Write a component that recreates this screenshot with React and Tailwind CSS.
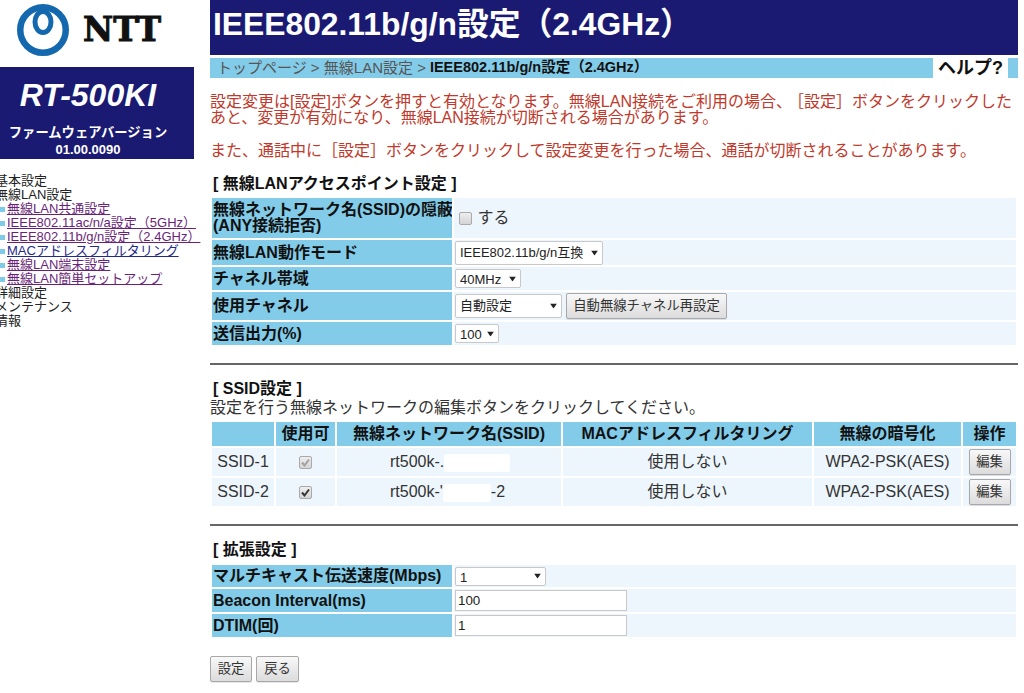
const font = '[font-family:"Liberation_Sans","Noto_Sans_CJK_JP",sans-serif]';

function Logo() {
  return (
    <svg width="52" height="52" viewBox="0 0 52 52" className="shrink-0">
      <circle cx="26" cy="26" r="22.75" fill="none" stroke="#1469ae" strokeWidth="6.5" />
      <ellipse cx="26" cy="18" rx="8" ry="10.5" fill="#fff" stroke="#1469ae" strokeWidth="5" />
    </svg>
  );
}

function Sidebar() {
  const items = [
    ['基本設定', null],
    ['無線LAN設定', null],
    ['無線LAN共通設定', 'text-[#6b1f7a]'],
    ['IEEE802.11ac/n/a設定（5GHz）', 'text-[#6b1f7a]'],
    ['IEEE802.11b/g/n設定（2.4GHz）', 'text-[#6b1f7a]'],
    ['MACアドレスフィルタリング', 'text-[#1f2a8c]'],
    ['無線LAN端末設定', 'text-[#6b1f7a]'],
    ['無線LAN簡単セットアップ', 'text-[#6b1f7a]'],
    ['詳細設定', null],
    ['メンテナンス', null],
    ['情報', null],
  ];
  return (
    <aside className="w-[210px] shrink-0 overflow-hidden">
      <div className="h-[67px] flex items-start pl-[17px] pt-[4px] gap-[14px]">
        <Logo />
        <span className='[font-family:"DejaVu_Serif",serif] font-bold text-[33px] leading-[52px] text-[#111] [-webkit-text-stroke:1px_#111]'>NTT</span>
      </div>
      <div className="w-[194px] h-[92px] bg-[#1a1a72] text-white text-center flex flex-col items-center pr-[18px]">
        <div className="text-[32px] leading-[34px] font-bold italic mt-[11px] whitespace-nowrap">RT-500KI</div>
        <div className="text-[13.3px] leading-[16px] font-bold mt-[13px] whitespace-nowrap">ファームウェアバージョン</div>
        <div className="text-[13px] leading-[14px] font-bold mt-[2px]">01.00.0090</div>
      </div>
      <ul className="mt-[15px] text-[13px] leading-[14px] text-[#222] whitespace-nowrap">
        {items.map(([t, c]) =>
          c ? (
            <li key={t} className="flex items-center h-[14px]">
              <span className="w-[5px] h-[5px] bg-[#7ecbe8] mr-[2px] shrink-0" />
              <a className={`${c} underline`}>{t}</a>
            </li>
          ) : (
            <li key={t} className="h-[14px] -ml-[5px]">{t}</li>
          )
        )}
      </ul>
    </aside>
  );
}

const btn = 'bg-gradient-to-b from-[#f8f8f8] to-[#dcdcdc] border border-[#a8a8a8] rounded-[2px] text-[#333] text-[13.33px] shadow-[0_1px_1px_rgba(0,0,0,0.1)]';
const th = 'bg-[#83cce9] font-bold text-[#111] text-[16px] leading-[16px] pl-[1px] p-0 text-left whitespace-nowrap overflow-hidden';
const td = 'bg-[#eef6fd] p-0 pl-[1px]';
const inputCls = 'block h-[21px] w-[172px] bg-white border border-[#c8c8c8] text-[13.33px] text-[#222] pl-[2px]';

function Select({ value, className }) {
  return (
    <span className={`relative block shrink-0 ${className}`}>
      <select className="appearance-none block w-full h-full bg-white border border-[#c8c8c8] rounded-[2px] text-[13px] text-[#222] pl-[4px]">
        <option>{value}</option>
      </select>
      <svg viewBox="0 0 7 5" className="absolute right-[5px] top-1/2 -translate-y-1/2 w-[7px] h-[5px] pointer-events-none">
        <path d="M0 0 H7 L3.5 5Z" fill="#222" />
      </svg>
    </span>
  );
}

function Check({ checked, disabled }) {
  return (
    <span className="relative inline-block w-[13px] h-[13px] align-middle">
      <input
        type="checkbox"
        defaultChecked={checked}
        disabled={disabled}
        className="appearance-none block w-[13px] h-[13px] rounded-[2px] border border-[#aaa] bg-gradient-to-b from-[#eee] to-[#d4d4d4]"
      />
      {checked && (
        <svg viewBox="0 0 13 13" className="absolute inset-0 w-[13px] h-[13px] pointer-events-none">
          <path d="M3 6.5 L5.5 9.5 L10 3.5" fill="none" stroke={disabled ? '#a0a0a0' : '#333'} strokeWidth="2" />
        </svg>
      )}
    </span>
  );
}

function Heading({ children, className = '' }) {
  return <div className={`font-bold text-[16px] leading-[16px] text-[#111] pl-[3px] ${className}`}>{children}</div>;
}

function AccessPoint() {
  return (
    <table className="border-separate border-spacing-[2px] table-fixed w-[808px]">
      <colgroup><col className="w-[240px]" /><col /></colgroup>
      <tbody>
        <tr className="h-[40px]">
          <th className={`${th} text-[15.7px]`}>無線ネットワーク名(SSID)の隠蔽<br />(ANY接続拒否)</th>
          <td className={`${td} pl-[5px]`}>
            <Check /> <span className="text-[16px] text-[#333] ml-[1px]">する</span>
          </td>
        </tr>
        <tr className="h-[25px]">
          <th className={th}>無線LAN動作モード</th>
          <td className={td}><Select value="IEEE802.11b/g/n互換" className="h-[24px] w-[148px]" /></td>
        </tr>
        <tr className="h-[23px]">
          <th className={th}>チャネル帯域</th>
          <td className={td}><Select value="40MHz" className="h-[19px] w-[66px]" /></td>
        </tr>
        <tr className="h-[28px]">
          <th className={th}>使用チャネル</th>
          <td className={td}>
            <div className="flex items-center gap-[4px]">
              <Select value="自動設定" className="h-[24px] w-[107px]" />
              <button className={`${btn} h-[26px] w-[161px]`}>自動無線チャネル再設定</button>
            </div>
          </td>
        </tr>
        <tr className="h-[23px]">
          <th className={th}>送信出力(%)</th>
          <td className={td}><Select value="100" className="h-[19px] w-[44px]" /></td>
        </tr>
      </tbody>
    </table>
  );
}

function SsidRow({ id, checked, disabled, name }) {
  const cell = 'bg-[#eef6fd] text-center text-[#333] text-[16px] p-0 h-[28px]';
  return (
    <tr>
      <td className={cell}>{id}</td>
      <td className={cell}><Check checked={checked} disabled={disabled} /></td>
      <td className={`${cell} text-left pl-[53px] whitespace-nowrap`}>{name}</td>
      <td className={cell}>使用しない</td>
      <td className={cell}>WPA2-PSK(AES)</td>
      <td className={cell}>
        <button className={`${btn} h-[26px] w-[42px] block mx-auto`}>編集</button>
      </td>
    </tr>
  );
}

function Blot({ w }) {
  return <span className={`inline-block h-[18px] bg-white rounded-[3px] align-middle ${w}`} />;
}

function SsidTable() {
  const h = 'bg-[#83cce9] font-bold text-[#111] text-[16px] text-center p-0 h-[23px]';
  return (
    <table className="border-separate border-spacing-[2px] table-fixed w-[808px]">
      <colgroup>
        <col className="w-[62px]" /><col className="w-[59px]" /><col className="w-[224px]" />
        <col className="w-[249px]" /><col className="w-[147px]" /><col />
      </colgroup>
      <thead>
        <tr>
          <th className={h}></th><th className={h}>使用可</th><th className={h}>無線ネットワーク名(SSID)</th>
          <th className={h}>MACアドレスフィルタリング</th><th className={h}>無線の暗号化</th><th className={h}>操作</th>
        </tr>
      </thead>
      <tbody>
        <SsidRow id="SSID-1" checked disabled name={<>rt500k-.<Blot w="w-[66px]" /></>} />
        <SsidRow id="SSID-2" checked name={<>rt500k-'<Blot w="w-[48px]" />-2</>} />
      </tbody>
    </table>
  );
}

function Extended() {
  return (
    <table className="border-separate border-spacing-[2px] table-fixed w-[808px]">
      <colgroup><col className="w-[240px]" /><col /></colgroup>
      <tbody>
        <tr className="h-[22px]">
          <th className={th}>マルチキャスト伝送速度(Mbps)</th>
          <td className={td}><Select value="1" className="h-[19px] w-[91px]" /></td>
        </tr>
        <tr className="h-[23px]">
          <th className={th}>Beacon Interval(ms)</th>
          <td className={td}><input defaultValue="100" className={inputCls} /></td>
        </tr>
        <tr className="h-[23px]">
          <th className={th}>DTIM(回)</th>
          <td className={td}><input defaultValue="1" className={inputCls} /></td>
        </tr>
      </tbody>
    </table>
  );
}

export default function App() {
  return (
    <div className={`${font} flex w-[1024px] h-[693px] overflow-hidden bg-white text-[16px]`}>
      <Sidebar />
      <main className="w-[808px] shrink-0">
        <h1 className="h-[55px] bg-[#1a1a72] text-white font-bold text-[31.8px] leading-[48px] pl-[3px] whitespace-nowrap">IEEE802.11b/g/n設定（2.4GHz）</h1>
        <div className="mt-[3px] h-[20px] bg-[#83cce9] flex items-center pl-[7px] text-[15px] text-[#555] whitespace-nowrap">
          <span>トップページ &gt; 無線LAN設定 &gt; </span>
          <b className="text-[#111] text-[14.5px] ml-[4px]">IEEE802.11b/g/n設定（2.4GHz）</b>
          <span className="ml-auto mr-[10px] w-[75px] h-[20px] bg-white text-[#111] font-bold text-[18px] text-center leading-[20px]">ヘルプ?</span>
        </div>
        <div className="text-[#c0392b] text-[16px] leading-[16px] mt-[16px]">
          <p className="whitespace-nowrap">設定変更は[設定]ボタンを押すと有効となります。無線LAN接続をご利用の場合、<span className="ml-[4px]">［設定］</span>ボタンをクリックした<br />あと、変更が有効になり、無線LAN接続が切断される場合があります。</p>
          <p className="mt-[17px]">また、通話中に［設定］ボタンをクリックして設定変更を行った場合、通話が切断されることがあります。</p>
        </div>
        <Heading className="mt-[17px] mb-[4px]">[ 無線LANアクセスポイント設定 ]</Heading>
        <AccessPoint />
        <hr className="mt-[16px] h-[2px] bg-[#666] border-0" />
        <Heading className="mt-[16px]">[ SSID設定 ]</Heading>
        <div className="text-[16px] leading-[16px] text-[#333] mt-[3px] mb-[4px]">設定を行う無線ネットワークの編集ボタンをクリックしてください。</div>
        <SsidTable />
        <hr className="mt-[16px] h-[2px] bg-[#666] border-0" />
        <Heading className="mt-[16px] mb-[5px]">[ 拡張設定 ]</Heading>
        <Extended />
        <div className="flex gap-[4px] mt-[17px]">
          <button className={`${btn} h-[26px] w-[42px]`}>設定</button>
          <button className={`${btn} h-[26px] w-[43px]`}>戻る</button>
        </div>
      </main>
    </div>
  );
}
